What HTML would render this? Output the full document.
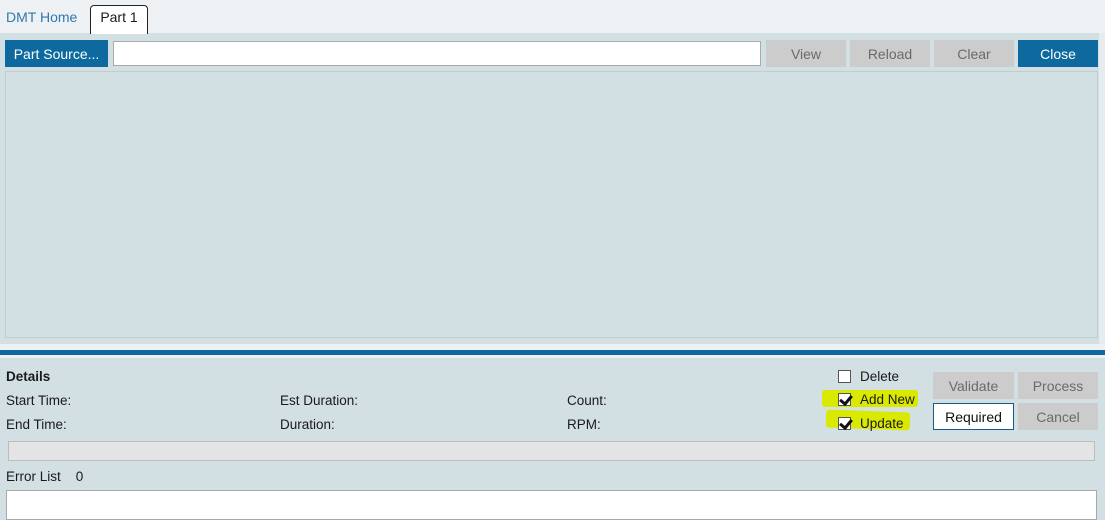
<!DOCTYPE html>
<html><head><meta charset="utf-8"><style>
*{box-sizing:border-box;margin:0;padding:0}
body{width:1105px;height:510px;overflow:hidden;background:#d2dfe3;font-family:"Liberation Sans",sans-serif;font-size:13.5px;color:#1a1a1a;position:relative}
.a{position:absolute}
.btn{position:absolute;height:27px;display:flex;align-items:center;justify-content:center;font-size:14px}
.g{background:#cccccc;color:#6a6a6a}
.b{background:#0e6a9e;color:#fff}
.cb{position:absolute;width:13px;height:13px;border:1px solid #555;background:#fff}
.cb.c::after{content:"";position:absolute;left:3px;top:-1px;width:5px;height:9px;border:solid #111;border-width:0 3px 3px 0;transform:rotate(40deg)}
.hl{position:absolute;background:#d9ea00;border-radius:3px}
</style></head><body>
<div class="a" style="left:0;top:0;width:1105px;height:33px;background:#eef1f4"></div>
<div class="a" style="left:6px;top:9px;color:#2e78ae;font-size:14px">DMT Home</div>
<div class="a" style="left:90px;top:5px;width:58px;height:29px;background:#fff;border:1px solid #222;border-bottom:none;border-radius:4px 4px 0 0;text-align:center;padding-top:3px;font-size:14px">Part 1</div>
<div class="btn b" style="left:5px;top:40px;width:103px">Part Source...</div>
<div class="a" style="left:113px;top:41px;width:648px;height:25px;background:#fff;border:1px solid #aaa"></div>
<div class="btn g" style="left:766px;top:40px;width:80px">View</div>
<div class="btn g" style="left:850px;top:40px;width:80px">Reload</div>
<div class="btn g" style="left:934px;top:40px;width:80px">Clear</div>
<div class="btn b" style="left:1018px;top:40px;width:80px">Close</div>
<div class="a" style="left:5px;top:71px;width:1093px;height:267px;border:1px solid #c2cdd1"></div>
<div class="a" style="left:1099px;top:33px;width:6px;height:311px;background:#e6ecef"></div>
<div class="a" style="left:0;top:344px;width:1105px;height:14px;background:#eef1f4"></div>
<div class="a" style="left:0;top:350px;width:1105px;height:5px;background:#0e6a9e"></div>
<div class="a" style="left:6px;top:369px;font-weight:bold">Details</div>
<div class="a" style="left:6px;top:393px">Start Time:</div>
<div class="a" style="left:6px;top:417px">End Time:</div>
<div class="a" style="left:280px;top:393px">Est Duration:</div>
<div class="a" style="left:280px;top:417px">Duration:</div>
<div class="a" style="left:567px;top:393px">Count:</div>
<div class="a" style="left:567px;top:417px">RPM:</div>
<div class="hl" style="left:822px;top:390px;width:96px;height:17px"></div>
<div class="hl" style="left:826px;top:411px;width:84px;height:18px;transform:rotate(2deg)"></div>
<div class="cb" style="left:838px;top:370px"></div>
<div class="a" style="left:860px;top:369px">Delete</div>
<div class="cb c" style="left:838px;top:393px"></div>
<div class="a" style="left:860px;top:392px">Add New</div>
<div class="cb c" style="left:838px;top:417px"></div>
<div class="a" style="left:860px;top:416px">Update</div>
<div class="btn g" style="left:933px;top:372px;width:81px">Validate</div>
<div class="btn g" style="left:1018px;top:372px;width:80px">Process</div>
<div class="btn" style="left:933px;top:403px;width:81px;background:#fff;border:1px solid #1a5a86;color:#111">Required</div>
<div class="btn g" style="left:1018px;top:403px;width:80px">Cancel</div>
<div class="a" style="left:8px;top:441px;width:1087px;height:20px;background:#e4e4e4;border:1px solid #bcbcbc"></div>
<div class="a" style="left:6px;top:469px">Error List&nbsp;&nbsp;&nbsp;&nbsp;0</div>
<div class="a" style="left:6px;top:490px;width:1091px;height:30px;background:#fff;border:1px solid #aaa"></div>
</body></html>
